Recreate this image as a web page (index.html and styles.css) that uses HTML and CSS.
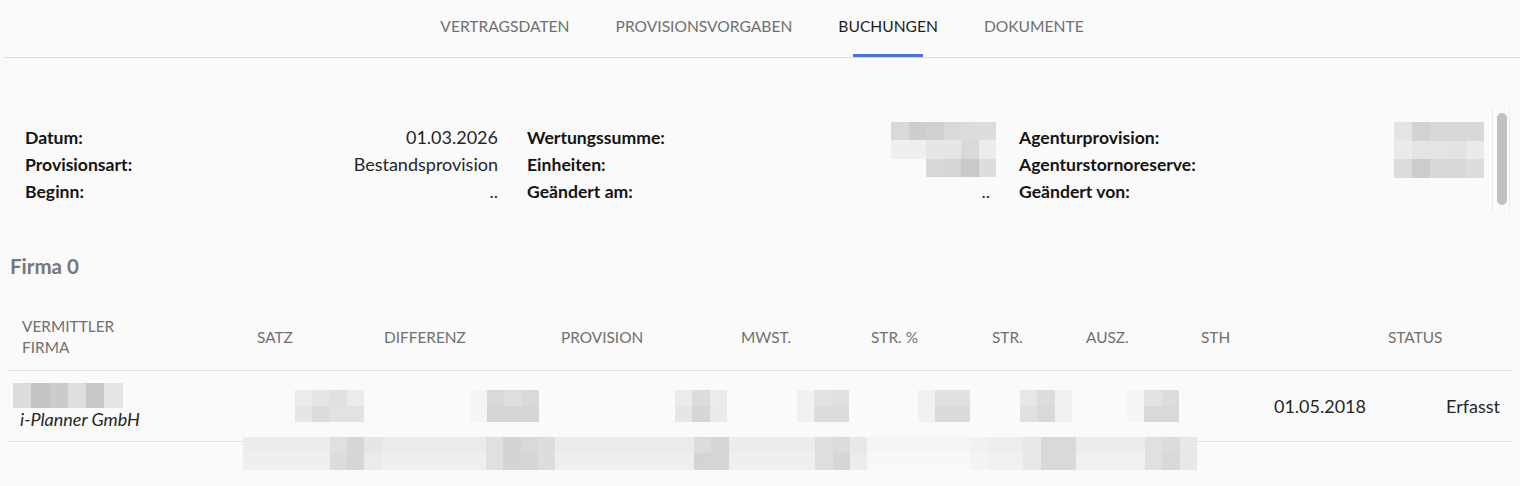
FILE: index.html
```html
<!DOCTYPE html>
<html>
  <head>
    <link rel="stylesheet" href="styles.css">

    <title>Buchungen</title>
  </head>

  <body>
    <div class="tabs">
      <div class="tab">Vertragsdaten</div>
      <div class="tab">Provisionsvorgaben</div>
      <div class="tab active">Buchungen</div>
      <div class="tab">Dokumente</div>
    </div>

    <div class="info">
      <div class="col col1">
        <div class="label">Datum:</div><div class="value">01.03.2026</div>
        <div class="label">Provisionsart:</div><div class="value">Bestandsprovision</div>
        <div class="label">Beginn:</div><div class="value">..</div>
      </div>

      <div class="col col2">
        <div class="label">Wertungssumme:</div>
        <div class="value span2"><div class="blur" data-w="17.5" data-h="18.3" data-px="d9 cd d0 d9 dc dd / ef ef e6 e6 d9 ec / -- -- d8 d5 c9 dd"></div></div>
        <div class="label">Einheiten:</div>
        <div class="label">Geändert am:</div><div class="value dots">..</div>
      </div>

      <div class="col col3">
        <div class="label">Agenturprovision:</div>
        <div class="value span2"><div class="blur" data-w="18" data-h="18.6" data-px="e4 d2 d8 d8 d8 / ea e4 e4 e2 ea / dc cc d8 d8 dc"></div></div>
        <div class="label">Agenturstornoreserve:</div>
        <div class="label">Geändert von:</div><div class="value"></div>
      </div>

      <div class="scroll"><div class="thumb"></div></div>
    </div>

    <p class="firma">Firma 0</p>

    <div class="table-wrap">
      <table class="bookings">
        <thead>
          <tr>
            <th class="w-verm">Vermittler<br>Firma</th>
            <th class="w-satz">Satz</th>
            <th class="w-diff">Differenz</th>
            <th class="w-prov">Provision</th>
            <th class="w-mwst">MwSt.</th>
            <th class="w-strp">Str. %</th>
            <th class="w-str">Str.</th>
            <th class="w-ausz">Ausz.</th>
            <th class="w-sth">STH</th>
            <th class="w-status">Status</th>
          </tr>
        </thead>
        <tbody>
          <tr>
            <td class="verm">
              <div class="blur" data-w="18.3" data-h="25" data-px="dc c4 cb de c8 e4"></div>
              <div class="company">i-Planner GmbH</div>
            </td>
            <td class="snug"><div class="blur" data-w="17.3" data-h="16" data-px="eb e6 e0 eb / e6 dc e2 e2"></div></td>
            <td><div class="blur" data-w="17.3" data-h="16" data-px="f4 d9 de d9 / f5 d5 d5 d5"></div></td>
            <td class="tight"><div class="blur" data-w="17.3" data-h="16" data-px="eb dc eb / e6 d6 ea"></div></td>
            <td><div class="blur" data-w="17.3" data-h="16" data-px="f1 e3 e0 / f1 dc dc"></div></td>
            <td><div class="blur" data-w="17.3" data-h="16" data-px="f1 e1 e1 / f1 da da"></div></td>
            <td class="tight"><div class="blur" data-w="17.3" data-h="16" data-px="e7 dc f1 / e0 d9 f1"></div></td>
            <td><div class="blur" data-w="17.3" data-h="16" data-px="f5 e3 dc / f5 d9 d9"></div></td>
            <td>01.05.2018</td>
            <td class="last">Erfasst</td>
          </tr>
        </tbody>
      </table>

      <div class="blur next-row" data-w="17.35" data-h="16.5" data-px="ec ec ec ec ec e0 d6 e6 eb eb eb eb eb eb e0 d4 d9 dd eb eb eb eb eb eb eb eb dc d6 ec ec ec ec ec de dc e8 f5 f5 f5 f5 f5 f5 f1 ed ed e8 d9 d9 ec ec ec ec e0 dc e8 / ef ef ef ef ef dc d6 eb ef ef ef ef ef ef e0 d4 d6 dd ef ef ef ef ef ef ef ef d4 d6 ef ef ef ef ef de d6 ec f8 f8 f8 f8 f8 f8 f3 f0 f0 e8 d9 d9 f0 f0 f0 f0 e0 d9 e8"></div>
    </div>

    <script>
      document.querySelectorAll('.blur').forEach(function (el) {
        const w = el.dataset.w
        const h = el.dataset.h
        el.dataset.px.trim().split('/').forEach(function (row) {
          const line = document.createElement('div')
          line.className = 'blur-row'
          row.trim().split(/\s+/).forEach(function (c) {
            const cell = document.createElement('span')
            cell.style.width = w + 'px'
            cell.style.height = h + 'px'
            if (c !== '--') cell.style.background = '#' + c + c + c
            line.appendChild(cell)
          })
          el.appendChild(line)
        })
      })
    </script>
  </body>
</html>
```

FILE: styles.css
```css
body{
  margin: 0;
  background-color: #fafafa;
  color: #212121;
  font-family: Lato, "Open Sans", Arial, sans-serif;
}

/* tabs */
.tabs{
  display: flex;
  justify-content: center;
  height: 57px;
  margin-left: 4px;
  border-bottom: 1px solid #dcdcdc;
}
.tab{
  position: relative;
  padding: 16px 23px 0 23px;
  font-size: 15.6px;
  line-height: 20px;
  text-transform: uppercase;
  color: #707070;
  cursor: pointer;
}
.tab.active{
  color: #1f1f1f;
}
.tab.active::after{
  content: "";
  position: absolute;
  left: 50%;
  bottom: 0;
  width: 70px;
  height: 3px;
  margin-left: -35px;
  background-color: #4a6ede;
}

/* info block */
.info{
  display: flex;
  width: 1510px;
  height: 104px;
  margin-top: 50px;
  box-sizing: border-box;
}
.col{
  display: grid;
  grid-template-columns: 1fr auto;
  grid-auto-rows: 27px;
  align-content: start;
  padding-top: 16px;
  font-size: 18px;
  line-height: 27px;
}
.col1{
  width: 473px;
  margin-left: 25px;
}
.col2{
  width: 469px;
  margin-left: 29px;
}
.col3{
  width: 465px;
  margin-left: 23px;
}
.label{
  grid-column: 1;
  font-weight: bold;
  color: #141414;
  font-size: 17.6px;
}
.value{
  grid-column: 2;
  text-align: right;
  color: #262626;
}
.value.span2{
  grid-row: 1 / span 2;
  margin-top: -2px;
}
.col2 .dots{
  padding-right: 6px;
}
.scroll{
  width: 16px;
  margin-left: 8px;
  border-left: 1px solid #ececec;
  border-right: 1px solid #ececec;
  padding-top: 5px;
}
.thumb{
  width: 10px;
  height: 92px;
  margin-left: 4px;
  border-radius: 5px;
  background-color: #c1c1c1;
}

/* blurred values */
.blur{
  display: inline-block;
  vertical-align: top;
}
.blur-row{
  display: flex;
}
.blur-row span{
  display: block;
  flex-shrink: 0;
}

.firma{
  margin: 42px 0 0 10px;
  font-size: 20.5px;
  line-height: 24px;
  font-weight: bold;
  color: #777777;
}

/* table */
.table-wrap{
  margin: 27px 0 0 8px;
  width: 1504px;
}
.bookings{
  width: 1504px;
  border-collapse: collapse;
  table-layout: fixed;
}
.bookings th,
.bookings td{
  box-sizing: border-box;
}
.bookings th{
  height: 65px;
  padding: 0 0 0 14px;
  text-align: left;
  vertical-align: middle;
  font-size: 15.4px;
  line-height: 21px;
  font-weight: normal;
  text-transform: uppercase;
  color: #707070;
  border-bottom: 1px solid #e0e0e0;
}
.bookings td{
  height: 71px;
  padding: 0 8px 0 0;
  text-align: right;
  vertical-align: middle;
  font-size: 18px;
  color: #262626;
  border-bottom: 1px solid #e0e0e0;
}
.bookings td.tight{
  padding-right: 0;
}
.bookings td.snug{
  padding-right: 6px;
}
.bookings td.last{
  padding-right: 12px;
}
.bookings td .blur{
  vertical-align: middle;
}
.bookings td.verm{
  padding-left: 5px;
  text-align: left;
}
.company{
  margin: 1px 0 0 7px;
  font-style: italic;
  line-height: 20px;
}
.w-verm{ width: 235px; }
.w-satz{ width: 127px; }
.w-diff{ width: 177px; }
.w-prov{ width: 180px; }
.w-mwst{ width: 130px; }
.w-strp{ width: 121px; }
.w-str{ width: 94px; }
.w-ausz{ width: 115px; }
.w-sth{ width: 187px; }
.w-status{ width: 138px; }

.next-row{
  display: block;
  position: relative;
  width: max-content;
  margin: -5px 0 0 235px;
}
```
